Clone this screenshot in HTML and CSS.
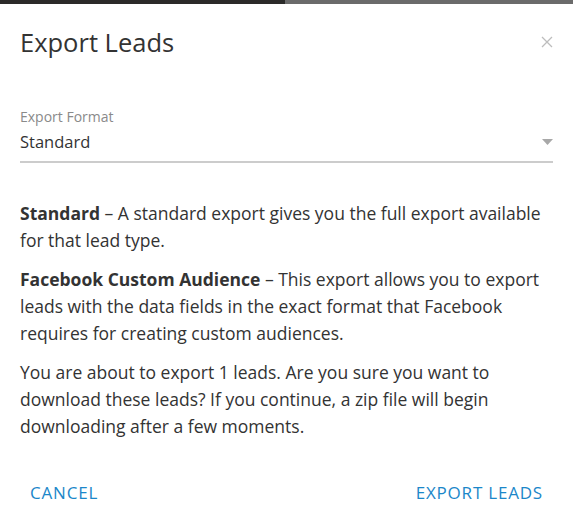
FILE: index.html
```html
<!DOCTYPE html>
<html lang="en">
<head>
<meta charset="utf-8">
<title>Export Leads</title>
<link rel="stylesheet" href="styles.css">
</head>
<body>
<div class="backdrop">
  <div class="backdrop-dark"></div>
  <div class="backdrop-gray"></div>
</div>
<div class="modal">
  <div class="modal-header">
    <h2 class="modal-title">Export Leads</h2>
    <button class="close-btn" aria-label="Close">
      <svg width="12" height="12" viewBox="0 0 12 12"><path d="M1 1 L11 11 M11 1 L1 11" stroke="#bdbdbd" stroke-width="1.3" fill="none"/></svg>
    </button>
  </div>
  <div class="field">
    <div class="field-label">Export Format</div>
    <div class="select">
      <span class="select-value">Standard</span>
      <svg class="select-arrow" width="11" height="6" viewBox="0 0 11 6"><path d="M0 0 H11 L5.5 6 Z" fill="#a8a8a8"/></svg>
    </div>
  </div>
  <div class="content">
    <p><strong>Standard</strong> – A standard export gives you the full export available for that lead type.</p>
    <p><strong>Facebook Custom Audience</strong> – This export allows you to export leads with the data fields in the exact format that Facebook requires for creating custom audiences.</p>
    <p>You are about to export 1 leads. Are you sure you want to download these leads? If you continue, a zip file will begin downloading after a few moments.</p>
  </div>
  <div class="modal-footer">
    <button class="btn">CANCEL</button>
    <button class="btn">EXPORT LEADS</button>
  </div>
</div>
</body>
</html>
```

FILE: styles.css
```css
* { box-sizing: border-box; }
html, body {
  margin: 0;
  padding: 0;
  background: #fff;
}
body {
  font-family: "Open Sans", "Lato", sans-serif;
  color: #333;
}
.backdrop {
  display: flex;
  height: 4px;
}
.backdrop-dark {
  width: 285px;
  background: #2b2a29;
}
.backdrop-gray {
  flex: 1;
  background: #6b6b6b;
}
.modal {
  padding: 0 20px;
}
.modal-header {
  display: flex;
  align-items: center;
  justify-content: space-between;
  padding-top: 22px;
}
.modal-title {
  margin: 0;
  font-size: 25.5px;
  font-weight: 400;
  line-height: 32px;
  color: #333;
}
.close-btn {
  border: 0;
  background: none;
  padding: 0;
  width: 12px;
  height: 12px;
  display: flex;
}
.field {
  margin-top: 50px;
}
.field-label {
  font-size: 14px;
  color: #8a8a8a;
  line-height: 18px;
}
.select {
  display: flex;
  justify-content: space-between;
  align-items: center;
  height: 37px;
  border-bottom: 2px solid #cccccc;
  padding-bottom: 4px;
}
.select-value {
  font-size: 16.5px;
  color: #333;
}
.content {
  margin-top: 37px;
}
.content p {
  margin: 0 0 12px;
  font-size: 17.5px;
  line-height: 27px;
  color: #333;
}
.content strong {
  font-weight: 700;
}
.modal-footer {
  display: flex;
  justify-content: space-between;
  margin-top: 41px;
  padding: 0 10px;
}
.btn {
  border: 0;
  background: none;
  padding: 0;
  font-family: inherit;
  font-size: 17px;
  letter-spacing: 0.8px;
  color: #1b87c9;
}
```
